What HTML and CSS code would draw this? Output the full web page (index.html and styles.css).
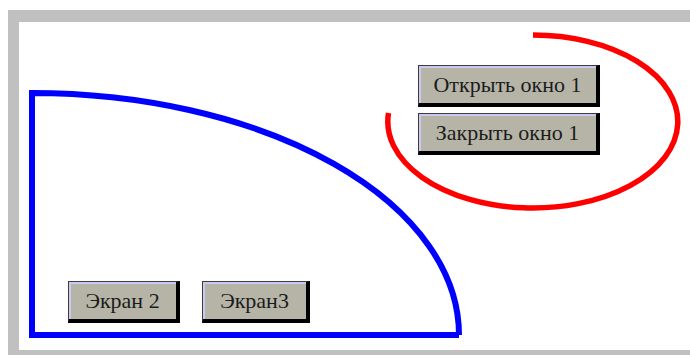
FILE: index.html
```html
<html>
    <head>
        <title>Окна</title>
        <link rel="stylesheet" href="styles.css">
    </head>
    <body>
        <div class="frame">
            <svg class="drawing" width="700" height="328" viewBox="0 0 700 328">
                <path d="M 440 313 L 13 313 L 13 71 A 427 242 0 0 1 440 313" fill="none" stroke="#0000ff" stroke-width="6" />
                <path d="M 514 13 A 145 86.5 0 1 1 369.5 91" fill="none" stroke="#ff0000" stroke-width="5.5" />
            </svg>
            <div class="window-buttons">
                <button class="btn wide">Открыть окно 1</button>
                <button class="btn wide">Закрыть окно 1</button>
            </div>
            <div class="screen-buttons">
                <button class="btn screen2">Экран 2</button>
                <button class="btn screen3">Экран3</button>
            </div>
        </div>
    </body>
</html>
```

FILE: styles.css
```css
body {
    margin: 0;
    background-color: #fff;
    overflow: hidden;
    font-family: "Liberation Serif", "DejaVu Serif", serif;
}
.frame {
    position: relative;
    margin: 10px 0 0 8px;
    width: 700px;
    height: 328px;
    border-top: 12px solid #c0c0c0;
    border-left: 11px solid #c0c0c0;
    border-bottom: 10px solid #c0c0c0;
    display: flex;
    flex-direction: column;
}
.drawing {
    position: absolute;
    top: 0;
    left: 0;
}
.window-buttons {
    position: relative;
    display: flex;
    flex-direction: column;
    gap: 6px;
    padding: 43px 0 0 399px;
}
.screen-buttons {
    position: relative;
    display: flex;
    gap: 22px;
    margin-top: auto;
    padding: 0 0 27px 49px;
}
.btn {
    height: 42px;
    padding: 0;
    background-color: #b5b4a7;
    color: #1c1c1c;
    font-family: "Liberation Serif", "DejaVu Serif", serif;
    font-size: 22px;
    border-top: 1px solid #3c3c3c;
    border-left: 1px solid #3c3c3c;
    border-right: 4px solid #000;
    border-bottom: 4px solid #000;
    box-shadow: inset 2px 2px 0 #c9c9f2;
    box-sizing: border-box;
}
.wide {
    width: 182px;
}
.screen2 {
    width: 112px;
}
.screen3 {
    width: 108px;
}
```
